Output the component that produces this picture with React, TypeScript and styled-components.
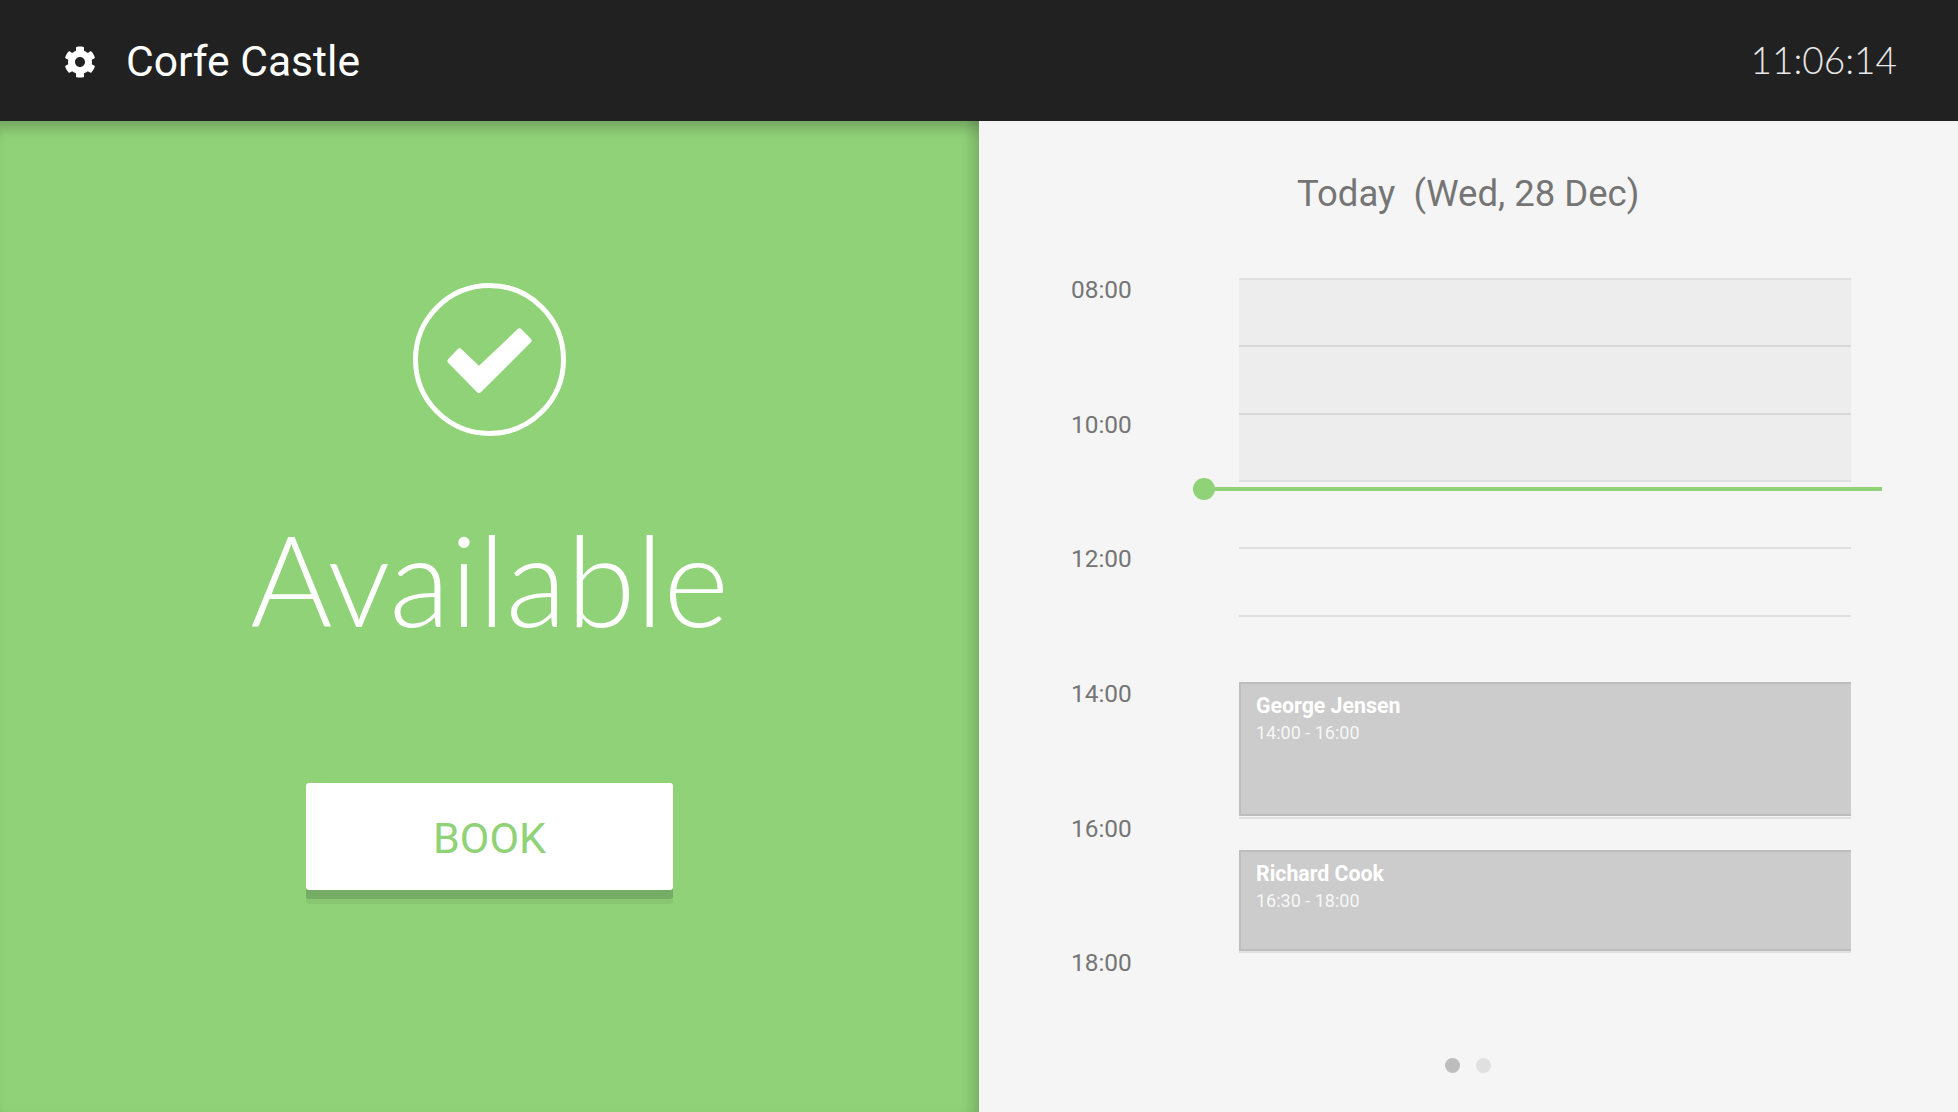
import React from "react";
import styled, { createGlobalStyle } from "styled-components";
import { FaCog } from "react-icons/fa";

const GREEN = "#90d278";
const ROW = 67.33;

const GlobalStyle = createGlobalStyle`
	html, body {
		margin: 0;
		padding: 0;
		height: 100%;
		overflow: hidden;
		background: #f5f5f5;
	}
	* {
		box-sizing: border-box;
	}
`;
const Page = styled.div`
	width: 1958px;
	height: 1112px;
	display: flex;
	flex-direction: column;
	font-family: Roboto, "Noto Sans", sans-serif;
`;
const Header = styled.header`
	height: 121px;
	flex: none;
	background: #212121;
	display: flex;
	align-items: center;
	justify-content: space-between;
	padding: 0 61px 0 64px;
	color: #fff;
`;
const Brand = styled.div`
	display: flex;
	align-items: center;
	gap: 30px;
	font-size: 42.6px;
	line-height: 1;
	padding-top: 2px;
`;
const Clock = styled.div`
	font-family: Lato, sans-serif;
	font-weight: 300;
	font-size: 37px;
	color: #e8e8e8;
	margin-top: -2px;
`;
const Main = styled.main`
	flex: 1;
	display: flex;
	min-height: 0;
`;
const StatusPanel = styled.section`
	width: 979px;
	flex: none;
	background: ${GREEN};
	box-shadow: inset 0 14px 12px -6px rgba(0, 0, 0, 0.19), inset -14px 0 12px -6px rgba(0, 0, 0, 0.14);
	color: #fff;
	display: flex;
	flex-direction: column;
	align-items: center;
	padding-top: 162px;
`;
const StatusCircle = styled.svg`
	width: 153px;
	height: 153px;
	display: block;
`;
const StatusText = styled.h1`
	margin: 78px 0 0;
	font-family: Lato, sans-serif;
	font-weight: 300;
	font-size: 125.5px;
	line-height: 130px;
`;
const BookButton = styled.button`
	margin-top: 139px;
	width: 367px;
	height: 107px;
	border: 0;
	border-radius: 3px;
	background: #fff;
	color: ${GREEN};
	font-family: Roboto, sans-serif;
	font-size: 43px;
	padding-top: 3px;
	box-shadow: 0 9px 0 #76ad66, 0 14px 0 rgba(118, 173, 102, 0.3);
`;
const SchedulePanel = styled.section`
	flex: 1;
	position: relative;
	background: #f5f5f5;
	color: #757575;
	padding: 49px 0 0 92px;
`;
const DayTitle = styled.h2`
	margin: 0 0 0 226px;
	width: 350px;
	font-size: 36.5px;
	font-weight: 400;
	line-height: 48px;
	white-space: pre;
`;
const Timeline = styled.div`
	margin-top: 60px;
	display: flex;
`;
const Hours = styled.div`
	width: 168px;
	flex: none;
	display: flex;
	flex-direction: column;
`;
const Hour = styled.div`
	height: ${ROW * 2}px;
	font-size: 24.4px;
	line-height: 23px;
`;
const Grid = styled.div`
	position: relative;
	width: 612px;
	height: ${ROW * 10 + 2}px;
`;
const GridRow = styled.div`
	height: ${ROW}px;
	border-top: 2px solid #e0e0e0;
`;
const PastOverlay = styled.div`
	position: absolute;
	top: 2px;
	left: 0;
	right: 0;
	height: 200px;
	background: rgba(0, 0, 0, 0.03);
`;
const NowLine = styled.div`
	position: absolute;
	top: 209px;
	left: -46px;
	width: 689px;
	height: 4px;
	background: ${GREEN};
	&::before {
		content: "";
		position: absolute;
		left: 0;
		top: -9px;
		width: 22px;
		height: 22px;
		border-radius: 50%;
		background: ${GREEN};
	}
`;
const Booking = styled.div<{ $top: number; $height: number }>`
	position: absolute;
	left: 0;
	right: 0;
	top: ${(p) => p.$top}px;
	height: ${(p) => p.$height}px;
	background: #ccc;
	border: 2px solid #bdbdbd;
	border-right: 0;
	padding: 9px 0 0 15px;
	color: #fff;
`;
const BookingName = styled.div`
	font-size: 21.3px;
	font-weight: 700;
	line-height: 26px;
`;
const BookingTime = styled.div`
	font-size: 18px;
	line-height: 27px;
	opacity: 0.85;
`;
const Pager = styled.div`
	position: absolute;
	left: 466px;
	bottom: 39px;
	display: flex;
	gap: 16px;
`;
const PagerDot = styled.span<{ $active?: boolean }>`
	width: 15px;
	height: 15px;
	border-radius: 50%;
	background: ${(p) => (p.$active ? "#bdbdbd" : "#e0e0e0")};
`;

const hours = ["08:00", "10:00", "12:00", "14:00", "16:00", "18:00"];
const bookings = [
	{ name: "George Jensen", time: "14:00 - 16:00", top: 404, height: 134 },
	{ name: "Richard Cook", time: "16:30 - 18:00", top: 572, height: 101 },
];

export default function App() {
	return (
		<Page>
			<GlobalStyle />
			<Header>
				<Brand>
					<FaCog size={32} />
					<span>Corfe Castle</span>
				</Brand>
				<Clock>11:06:14</Clock>
			</Header>
			<Main>
				<StatusPanel>
					<StatusCircle viewBox="0 0 153 153">
						<circle cx="76.5" cy="76.5" r="74" fill="none" stroke="#fff" strokeWidth="5" />
						<path
							d="M106.5 48.5 L115.5 57.5 L66 107 L37.5 78 L46.5 68.5 L66 87 Z"
							fill="#fff"
							stroke="#fff"
							strokeWidth="6"
							strokeLinejoin="round"
						/>
					</StatusCircle>
					<StatusText>Available</StatusText>
					<BookButton>BOOK</BookButton>
				</StatusPanel>
				<SchedulePanel>
					<DayTitle>{"Today  (Wed, 28 Dec)"}</DayTitle>
					<Timeline>
						<Hours>
							{hours.map((h) => (
								<Hour key={h}>{h}</Hour>
							))}
						</Hours>
						<Grid>
							{Array.from({ length: 11 }).map((_, i) => (
								<GridRow key={i} />
							))}
							<PastOverlay />
							<NowLine />
							{bookings.map((b) => (
								<Booking key={b.name} $top={b.top} $height={b.height}>
									<BookingName>{b.name}</BookingName>
									<BookingTime>{b.time}</BookingTime>
								</Booking>
							))}
						</Grid>
					</Timeline>
					<Pager>
						<PagerDot $active />
						<PagerDot />
					</Pager>
				</SchedulePanel>
			</Main>
		</Page>
	);
}
